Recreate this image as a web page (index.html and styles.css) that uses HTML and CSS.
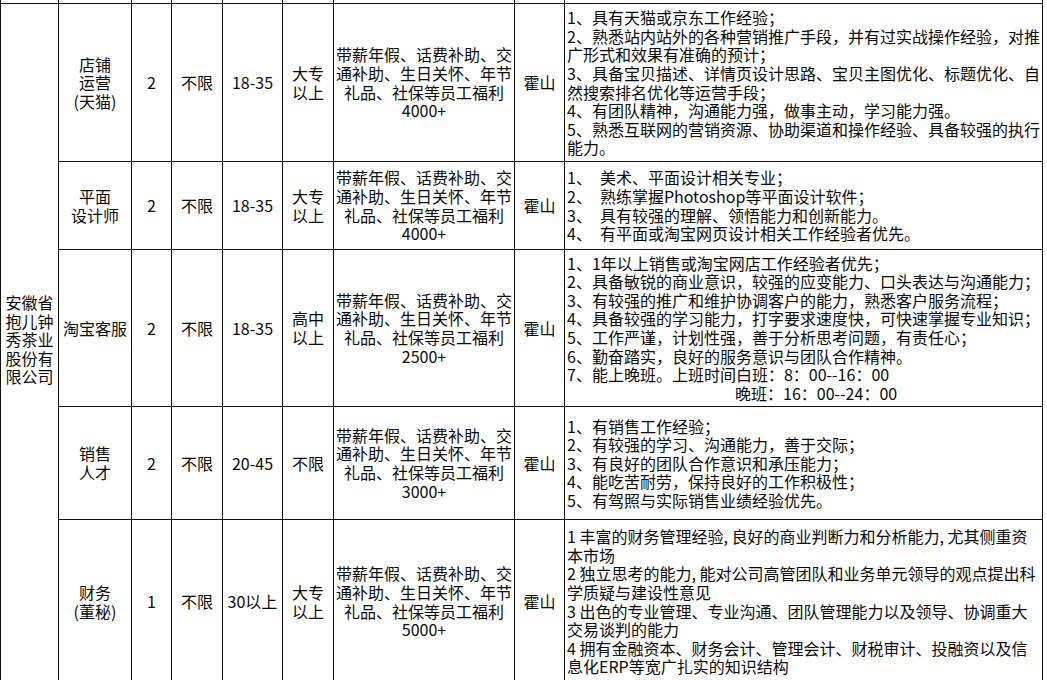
FILE: index.html
```html
<!DOCTYPE html>
<html lang="zh-CN">
<head>
<meta charset="utf-8">
<title>招聘岗位</title>
<link rel="stylesheet" href="styles.css">
</head>
<body>
<table class="sheet">
  <colgroup>
    <col class="c-company">
    <col class="c-post">
    <col class="c-num">
    <col class="c-sex">
    <col class="c-age">
    <col class="c-edu">
    <col class="c-benefit">
    <col class="c-place">
    <col class="c-desc">
  </colgroup>
  <tr class="strip">
    <td></td><td></td><td></td><td></td><td></td><td></td><td></td><td></td><td></td>
  </tr>
  <tr class="r1">
    <td class="company" rowspan="5">安徽省<br>抱儿钟<br>秀茶业<br>股份有<br>限公司</td>
    <td>店铺<br>运营<br>(天猫)</td>
    <td>2</td>
    <td>不限</td>
    <td>18-35</td>
    <td>大专<br>以上</td>
    <td>带薪年假、话费补助、交<br>通补助、生日关怀、年节<br>礼品、社保等员工福利<br>4000+</td>
    <td>霍山</td>
    <td class="desc">1、具有天猫或京东工作经验；<br>2、熟悉站内站外的各种营销推广手段，并有过实战操作经验，对推<br>广形式和效果有准确的预计；<br>3、具备宝贝描述、详情页设计思路、宝贝主图优化、标题优化、自<br>然搜索排名优化等运营手段；<br>4、有团队精神，沟通能力强，做事主动，学习能力强。<br>5、熟悉互联网的营销资源、协助渠道和操作经验、具备较强的执行<br>能力。</td>
  </tr>
  <tr class="r2">
    <td>平面<br>设计师</td>
    <td>2</td>
    <td>不限</td>
    <td>18-35</td>
    <td>大专<br>以上</td>
    <td>带薪年假、话费补助、交<br>通补助、生日关怀、年节<br>礼品、社保等员工福利<br>4000+</td>
    <td>霍山</td>
    <td class="desc">1、&ensp;美术、平面设计相关专业；<br>2、&ensp;熟练掌握Photoshop等平面设计软件；<br>3、&ensp;具有较强的理解、领悟能力和创新能力。<br>4、&ensp;有平面或淘宝网页设计相关工作经验者优先。</td>
  </tr>
  <tr class="r3">
    <td>淘宝客服</td>
    <td>2</td>
    <td>不限</td>
    <td>18-35</td>
    <td>高中<br>以上</td>
    <td>带薪年假、话费补助、交<br>通补助、生日关怀、年节<br>礼品、社保等员工福利<br>2500+</td>
    <td>霍山</td>
    <td class="desc">1、1年以上销售或淘宝网店工作经验者优先；<br>2、具备敏锐的商业意识，较强的应变能力、口头表达与沟通能力；<br>3、有较强的推广和维护协调客户的能力，熟悉客户服务流程；<br>4、具备较强的学习能力，打字要求速度快，可快速掌握专业知识；<br>5、工作严谨，计划性强，善于分析思考问题，有责任心；<br>6、勤奋踏实，良好的服务意识与团队合作精神。<br>7、能上晚班。上班时间白班：8：00--16：00<br><span class="late">晚班：16：00--24：00</span></td>
  </tr>
  <tr class="r4">
    <td>销售<br>人才</td>
    <td>2</td>
    <td>不限</td>
    <td>20-45</td>
    <td>不限</td>
    <td>带薪年假、话费补助、交<br>通补助、生日关怀、年节<br>礼品、社保等员工福利<br>3000+</td>
    <td>霍山</td>
    <td class="desc">1、有销售工作经验；<br>2、有较强的学习、沟通能力，善于交际；<br>3、有良好的团队合作意识和承压能力；<br>4、能吃苦耐劳，保持良好的工作积极性；<br>5、有驾照与实际销售业绩经验优先。</td>
  </tr>
  <tr class="r5">
    <td>财务<br>(董秘)</td>
    <td>1</td>
    <td>不限</td>
    <td>30以上</td>
    <td>大专<br>以上</td>
    <td>带薪年假、话费补助、交<br>通补助、生日关怀、年节<br>礼品、社保等员工福利<br>5000+</td>
    <td>霍山</td>
    <td class="desc">1 丰富的财务管理经验, 良好的商业判断力和分析能力, 尤其侧重资<br>本市场<br>2 独立思考的能力, 能对公司高管团队和业务单元领导的观点提出科<br>学质疑与建设性意见<br>3 出色的专业管理、专业沟通、团队管理能力以及领导、协调重大<br>交易谈判的能力<br>4 拥有金融资本、财务会计、管理会计、财税审计、投融资以及信<br>息化ERP等宽广扎实的知识结构</td>
  </tr>
</table>
</body>
</html>
```

FILE: styles.css
```css
html, body {
  margin: 0;
  padding: 0;
  background: #ffffff;
}

body {
  font-family: "Noto Sans CJK SC", "Noto Sans", sans-serif;
  overflow: hidden;
}

.sheet {
  border-collapse: collapse;
  table-layout: fixed;
  width: 1042px;
  font-size: 16px;
  line-height: 18.6px;
  color: #0a0a0a;
  font-weight: 400;
}

.c-company { width: 58px; }
.c-post { width: 73px; }
.c-num { width: 40px; }
.c-sex { width: 51px; }
.c-age { width: 60px; }
.c-edu { width: 51px; }
.c-benefit { width: 181px; }
.c-place { width: 50px; }
.c-desc { width: 478px; }

.sheet td {
  border: 1px solid #111;
  padding: 0 1px;
  text-align: center;
  vertical-align: middle;
  white-space: nowrap;
  overflow: hidden;
}

.sheet td.desc {
  text-align: left;
  padding-left: 2px;
}

.sheet td.company {
  padding-bottom: 8px;
}

.late {
  display: inline-block;
  padding-left: 168px;
}

.strip td {
  height: 3px;
  padding: 0;
  border-top: none;
  line-height: 0;
  font-size: 0;
}

.r1 { height: 158px; }
.r2 { height: 88px; }
.r3 { height: 157px; }
.r4 { height: 113px; }
.r5 { height: 164px; }
```
